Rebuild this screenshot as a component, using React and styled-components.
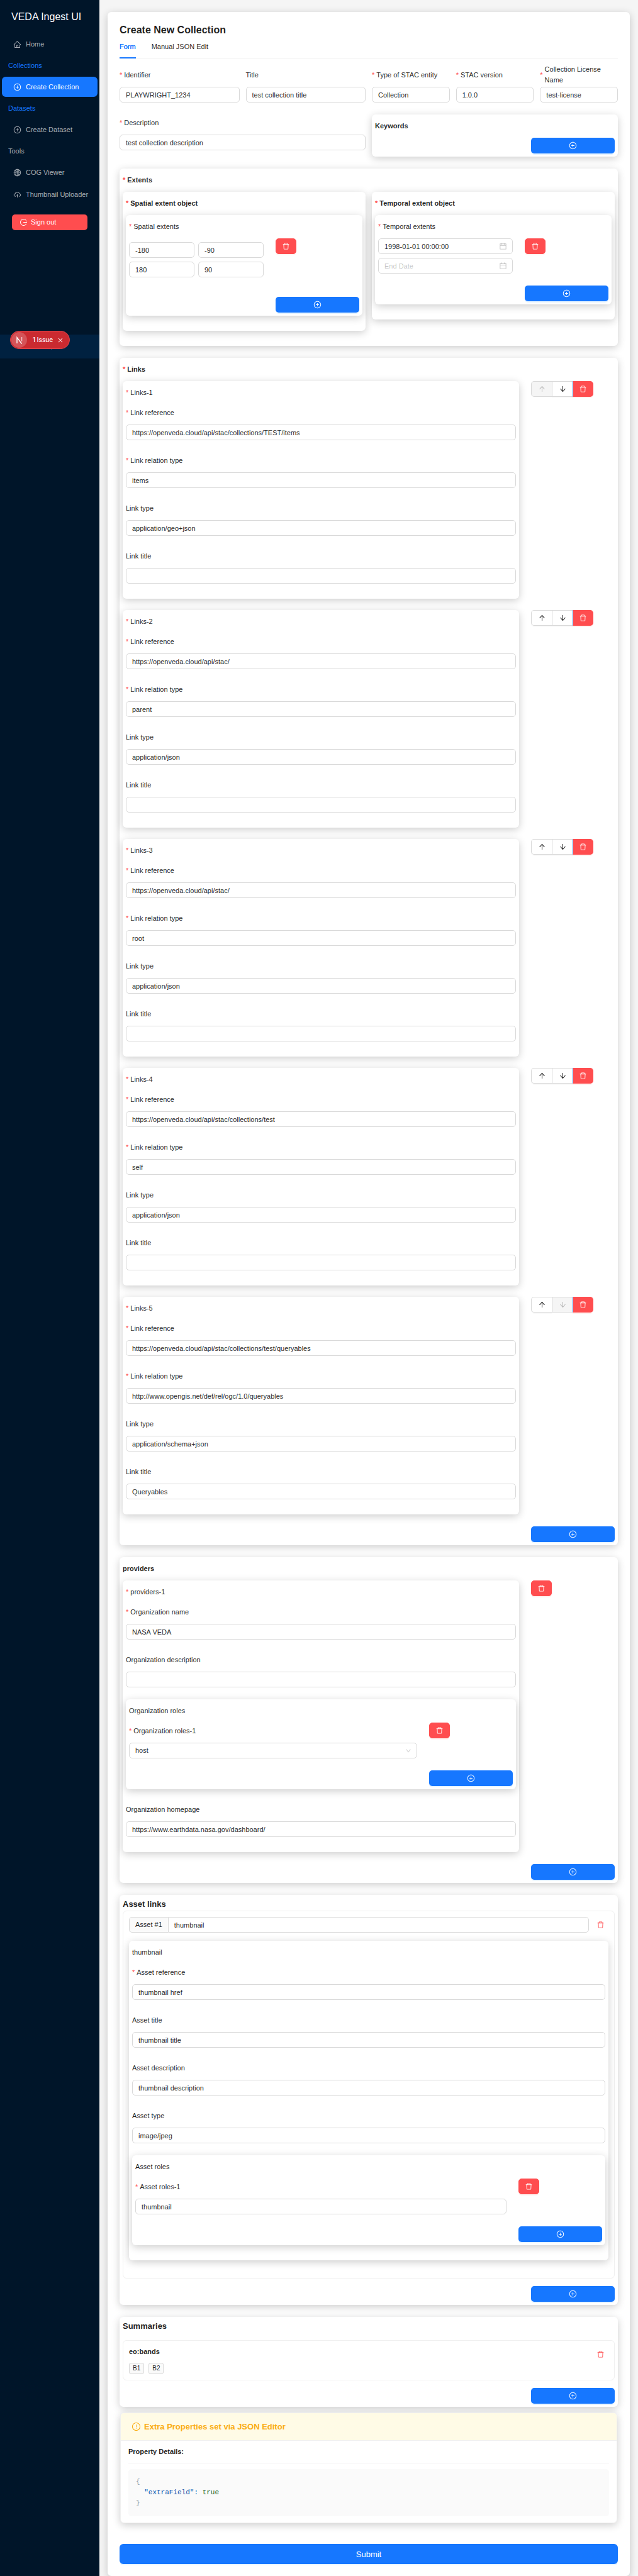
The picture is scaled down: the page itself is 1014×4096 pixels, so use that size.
import React, { useId } from "react";
import styled, { createGlobalStyle, css } from "styled-components";
import {
  AiOutlineHome,
  AiOutlinePlusCircle,
  AiOutlineGlobal,
  AiOutlineCloudUpload,
  AiOutlineLogout,
  AiOutlineDelete,
  AiOutlineArrowUp,
  AiOutlineArrowDown,
  AiOutlineCalendar,
  AiOutlineDown,
  AiOutlineExclamationCircle,
  AiOutlineLeft,
  AiOutlineClose,
} from "react-icons/ai";

const GlobalStyle = createGlobalStyle`
  *, *::before, *::after { box-sizing: border-box; }
  body {
    margin: 0;
    background: #f5f5f5;
    color: rgba(0, 0, 0, 0.88);
    font-family: "Liberation Sans", Arial, sans-serif;
    font-size: 11px;
    line-height: 17px;
  }
  button, input, select { font: inherit; color: inherit; }
  svg { display: block; flex: none; }
`;

const shadow = "0 3px 13px rgba(0, 0, 0, 0.2)";

/* ---------- page frame ---------- */

const Page = styled.div`
  display: flex;
  align-items: stretch;
  min-height: 100vh;
  overflow: hidden;
`;

const Sider = styled.aside`
  flex: 0 0 158px;
  background: #001529;
  color: rgba(255, 255, 255, 0.65);
`;

const SiderPanel = styled.div`
  position: relative;
  display: flex;
  flex-direction: column;
  min-height: 570px;
`;

const Brand = styled.div`
  padding: 14px 18px 15px;
  color: #fff;
  font-size: 16px;
  line-height: 25px;
`;

const Menu = styled.nav`
  display: flex;
  flex-direction: column;
  gap: 3px;
`;

const MenuItem = styled.a`
  display: flex;
  align-items: center;
  gap: 7px;
  height: 32px;
  margin: 0 3px;
  padding-left: 18px;
  border-radius: 6px;
  text-decoration: none;
  white-space: nowrap;
  color: ${(p) => (p.$active ? "#fff" : "rgba(255, 255, 255, 0.65)")};
  background: ${(p) => (p.$active ? "#1677ff" : "transparent")};
`;

const MenuGroup = styled.div`
  height: 30px;
  padding: 6px 13px;
  line-height: 18px;
  color: ${(p) => (p.$accent ? "#1677ff" : "rgba(255, 255, 255, 0.65)")};
`;

const SignOut = styled.button`
  display: flex;
  align-items: center;
  gap: 5px;
  height: 25px;
  margin: 16px 19px 0;
  padding: 0 12px;
  border: 0;
  border-radius: 5px;
  background: #ff4d4f;
  color: #fff;
`;

const Trigger = styled.button`
  display: flex;
  align-items: center;
  justify-content: center;
  height: 38px;
  margin-top: auto;
  border: 0;
  background: #002140;
  color: #fff;
`;

const IssueBadge = styled.div`
  position: absolute;
  left: 16px;
  bottom: 15px;
  display: flex;
  align-items: center;
  height: 29px;
  width: 95px;
  padding: 0 9px 0 1px;
  border: 1px solid #e5484d;
  border-radius: 15px;
  background: #ca2a30;
  color: #fff;
  font-family: Inter, sans-serif;
  font-size: 10px;
  font-weight: 500;
  white-space: nowrap;
`;

const IssueLogo = styled.span`
  display: flex;
  align-items: center;
  justify-content: center;
  width: 25px;
  height: 25px;
  margin-right: 9px;
  border-radius: 50%;
  background: #d55358;
`;

const IssueClose = styled.button`
  display: flex;
  margin-left: auto;
  padding: 0;
  border: 0;
  background: none;
`;

const Main = styled.main`
  flex: 1;
  min-width: 0;
  padding: 19px 13px 0;
`;

const Sheet = styled.div`
  padding: 19px;
  border-radius: 6px;
  background: #fff;
  box-shadow: ${shadow};
`;

const PageTitle = styled.h1`
  margin: 0;
  font-size: 16px;
  line-height: 19px;
`;

const Tabs = styled.div`
  display: flex;
  gap: 25px;
  margin-bottom: 13px;
  border-bottom: 1px solid #f0f0f0;
`;

const Tab = styled.button`
  padding: 9px 0 8px;
  margin-bottom: -1px;
  border: 0;
  border-bottom: 2px solid ${(p) => (p.$active ? "#1677ff" : "transparent")};
  background: none;
  color: ${(p) => (p.$active ? "#1677ff" : "inherit")};
  text-shadow: ${(p) => (p.$active ? "0 0 0.25px currentcolor" : "none")};
`;

/* ---------- layout pieces ---------- */

const Grid = styled.div`
  display: grid;
  grid-template-columns: repeat(24, minmax(0, 1fr));
  column-gap: 10px;
  align-items: start;
  margin-bottom: 19px;
`;

const Col = styled.div`
  grid-column: span ${(p) => p.$span};
`;

const Group = styled.section`
  padding: 5px;
  border-radius: 6px;
  background: #fff;
  box-shadow: ${shadow};
  margin-bottom: ${(p) => (p.$last ? 0 : p.$tight ? 9 : 19)}px;
`;

const labelText = css`
  display: flex;
  align-items: center;
  height: 26px;
  margin: 0 0 6px;
  font-size: 11px;
  font-weight: ${(p) => (p.$strong ? 700 : 400)};
  &::before {
    content: ${(p) => (p.$required ? '"*"' : "none")};
    margin-right: 3px;
    color: #ff4d4f;
  }
`;

const Legend = styled.h2`
  ${labelText}
`;

const SectionTitle = styled.h2`
  margin: 0 0 ${(p) => (p.$spaced ? 12 : 0)}px;
  font-size: 13px;
  line-height: 20px;
`;

const FieldBox = styled.div`
  margin-bottom: ${(p) => (p.$flush ? 0 : 19)}px;
`;

const FieldLabel = styled.label`
  ${labelText}
`;

const control = css`
  display: block;
  width: 100%;
  height: 25px;
  padding: 0 9px;
  border: 1px solid #d9d9d9;
  border-radius: 5px;
  background: #fff;
  outline: none;
`;

const TextInput = styled.input`
  ${control}
  &::placeholder { color: rgba(0, 0, 0, 0.25); }
`;

const ControlWrap = styled.div`
  display: grid;
  align-items: center;
  > * { grid-area: 1 / 1; }
  > svg {
    justify-self: end;
    margin-right: 9px;
    color: rgba(0, 0, 0, 0.25);
    pointer-events: none;
  }
`;

const Select = styled.select`
  ${control}
  appearance: none;
`;

const ItemRow = styled.div`
  display: grid;
  grid-template-columns: minmax(0, 1fr) 133px;
  column-gap: 19px;
  align-items: start;
`;

const ItemList = styled.div`
  display: flex;
  flex-direction: column;
  gap: 18px;
`;

const BoundsGrid = styled.div`
  display: grid;
  grid-template-columns: 1fr 1fr;
  gap: 6px;
  padding: 6px 0 12px;
`;

const DateStack = styled.div`
  display: grid;
  gap: 6px;
`;

const Actions = styled.div`
  display: flex;
`;

const IconButton = styled.button`
  display: flex;
  align-items: center;
  justify-content: center;
  width: 33px;
  height: 25px;
  padding: 0;
  border: 1px solid ${(p) => (p.$danger ? "#ff4d4f" : "#d9d9d9")};
  border-radius: 5px;
  background: ${(p) => (p.$danger ? "#ff4d4f" : "#fff")};
  color: ${(p) => (p.$danger ? "#fff" : "inherit")};
  box-shadow: 0 2px 0 ${(p) => (p.$danger ? "rgba(255, 38, 5, 0.06)" : "rgba(0, 0, 0, 0.02)")};
  &:disabled {
    background: #f5f5f5;
    color: rgba(0, 0, 0, 0.25);
    box-shadow: none;
  }
  ${Actions} > &:not(:first-child) {
    border-top-left-radius: 0;
    border-bottom-left-radius: 0;
    border-left-color: ${(p) => (p.$danger ? "#4096ff" : "#d9d9d9")};
  }
  ${Actions} > &:not(:last-child) {
    border-top-right-radius: 0;
    border-bottom-right-radius: 0;
    border-right: 0;
  }
`;

const GhostDelete = styled.button`
  display: flex;
  align-items: center;
  justify-content: center;
  width: 25px;
  height: 25px;
  padding: 0;
  border: 0;
  background: none;
  color: #ff4d4f;
`;

const AddRow = styled.div`
  display: flex;
  justify-content: flex-end;
  margin-top: ${(p) => p.$gap}px;
`;

const AddButton = styled.button`
  display: flex;
  align-items: center;
  justify-content: center;
  width: 133px;
  height: 25px;
  padding: 0;
  border: 0;
  border-radius: 5px;
  background: #1677ff;
  color: #fff;
  box-shadow: 0 2px 0 rgba(5, 145, 255, 0.1);
`;

const Outline = styled.div`
  padding: 9px;
  border: 1px solid #f0f0f0;
  border-radius: 6px;
`;

const AssetHead = styled.div`
  display: flex;
  align-items: center;
  gap: 6px;
  margin-bottom: 13px;
`;

const AddonField = styled.div`
  display: flex;
  flex: 1;
`;

const Addon = styled.label`
  display: flex;
  align-items: center;
  padding: 0 9px;
  border: 1px solid #d9d9d9;
  border-right: 0;
  border-radius: 5px 0 0 5px;
  background: #fafafa;
  white-space: nowrap;
`;

const AddonInput = styled(TextInput)`
  border-radius: 0 5px 5px 0;
`;

const SummaryItem = styled(Outline)`
  display: flex;
  align-items: flex-start;
  justify-content: space-between;
`;

const SummaryName = styled.h3`
  margin: 0 0 9px;
  font-size: 11px;
  line-height: 17px;
`;

const Tags = styled.div`
  display: flex;
  gap: 7px;
`;

const Tag = styled.span`
  height: 18px;
  padding: 0 5px;
  border: 1px solid #d9d9d9;
  border-radius: 3px;
  background: #fafafa;
  font-size: 10px;
  line-height: 16px;
`;

const ExtraCard = styled.section`
  margin: 0 1px 33px;
  border: 1px solid #f0f0f0;
  border-radius: 6px;
  overflow: hidden;
  background: #fff;
  box-shadow: ${shadow};
`;

const ExtraHead = styled.header`
  display: flex;
  align-items: center;
  gap: 5px;
  height: 44px;
  padding: 0 17px;
  border-bottom: 1px solid #f0f0f0;
  background: #fffbe6;
  color: #faad14;
  h2 { margin: 0; font-size: 13px; }
`;

const ExtraBody = styled.div`
  padding: 9px 12px 10px;
  h3 {
    margin: 0 0 9px;
    padding-bottom: 9px;
    border-bottom: 1px solid #f0f0f0;
    font-size: 11px;
    line-height: 17px;
  }
`;

const Code = styled.pre`
  margin: 0;
  padding: 12px;
  border-radius: 5px;
  background: #fafafa;
  color: #0550ae;
  font-family: "Liberation Mono", monospace;
  font-size: 11px;
  line-height: 17px;
`;

const Brace = styled.span`color: #8c9bab;`;
const Literal = styled.span`color: #116329;`;

const Submit = styled.button`
  display: block;
  width: 100%;
  height: 32px;
  border: 0;
  border-radius: 6px;
  background: #1677ff;
  color: #fff;
  font-size: 13px;
  box-shadow: 0 2px 0 rgba(5, 145, 255, 0.1);
`;

/* ---------- small composites ---------- */

function Field({ label, value = "", required, flush }) {
  const id = useId();
  return (
    <FieldBox $flush={flush}>
      <FieldLabel htmlFor={id} $required={required}>{label}</FieldLabel>
      <TextInput id={id} defaultValue={value} />
    </FieldBox>
  );
}

function Add({ gap = 19, label = "Add item" }) {
  return (
    <AddRow $gap={gap}>
      <AddButton type="button" aria-label={label}><AiOutlinePlusCircle size={13} /></AddButton>
    </AddRow>
  );
}

function Remove() {
  return <IconButton type="button" $danger aria-label="Remove"><AiOutlineDelete size={13} /></IconButton>;
}

function DateField({ label, value, placeholder }) {
  return (
    <ControlWrap>
      <TextInput aria-label={label} defaultValue={value} placeholder={placeholder} />
      <AiOutlineCalendar size={13} />
    </ControlWrap>
  );
}

function LinkItem({ index, count, link }) {
  return (
    <ItemRow>
      <Group $last>
        <Legend as="h3" $required>{`Links-${index + 1}`}</Legend>
        <Field label="Link reference" value={link.href} required />
        <Field label="Link relation type" value={link.rel} required />
        <Field label="Link type" value={link.type} />
        <Field label="Link title" value={link.title} />
      </Group>
      <Actions>
        <IconButton type="button" disabled={index === 0} aria-label="Move up"><AiOutlineArrowUp size={13} /></IconButton>
        <IconButton type="button" disabled={index === count - 1} aria-label="Move down"><AiOutlineArrowDown size={13} /></IconButton>
        <Remove />
      </Actions>
    </ItemRow>
  );
}

const links = [
  { href: "https://openveda.cloud/api/stac/collections/TEST/items", rel: "items", type: "application/geo+json" },
  { href: "https://openveda.cloud/api/stac/", rel: "parent", type: "application/json" },
  { href: "https://openveda.cloud/api/stac/", rel: "root", type: "application/json" },
  { href: "https://openveda.cloud/api/stac/collections/test", rel: "self", type: "application/json" },
  {
    href: "https://openveda.cloud/api/stac/collections/test/queryables",
    rel: "http://www.opengis.net/def/rel/ogc/1.0/queryables",
    type: "application/schema+json",
    title: "Queryables",
  },
];

const bounds = [
  ["West", "-180"],
  ["South", "-90"],
  ["East", "180"],
  ["North", "90"],
];

function Sidebar() {
  return (
    <Sider>
      <SiderPanel>
        <Brand>VEDA Ingest UI</Brand>
        <Menu>
          <MenuItem href="#home"><AiOutlineHome size={13} />Home</MenuItem>
          <MenuGroup $accent>Collections</MenuGroup>
          <MenuItem href="#create-collection" $active><AiOutlinePlusCircle size={13} />Create Collection</MenuItem>
          <MenuGroup $accent>Datasets</MenuGroup>
          <MenuItem href="#create-dataset"><AiOutlinePlusCircle size={13} />Create Dataset</MenuItem>
          <MenuGroup>Tools</MenuGroup>
          <MenuItem href="#cog-viewer"><AiOutlineGlobal size={13} />COG Viewer</MenuItem>
          <MenuItem href="#thumbnails"><AiOutlineCloudUpload size={13} />Thumbnail Uploader</MenuItem>
        </Menu>
        <SignOut type="button"><AiOutlineLogout size={13} />Sign out</SignOut>
        <Trigger type="button" aria-label="Collapse menu"><AiOutlineLeft size={11} /></Trigger>
        <IssueBadge>
          <IssueLogo>
            <svg width="14" height="14" viewBox="0 0 14 14" fill="none" stroke="#fff" strokeWidth="1.4">
              <path d="M3 12V2.6L10.6 12.6" />
              <path d="M10.6 2v6.6" strokeOpacity="0.7" />
            </svg>
          </IssueLogo>
          1 Issue
          <IssueClose type="button" aria-label="Dismiss"><AiOutlineClose size={10} /></IssueClose>
        </IssueBadge>
      </SiderPanel>
    </Sider>
  );
}

export default function App() {
  const roleId = useId();
  const assetId = useId();
  return (
    <>
      <GlobalStyle />
      <Page>
        <Sidebar />
        <Main>
          <Sheet>
            <PageTitle>Create New Collection</PageTitle>
            <Tabs>
              <Tab type="button" $active>Form</Tab>
              <Tab type="button">Manual JSON Edit</Tab>
            </Tabs>

            <Grid>
              <Col $span={6}><Field flush required label="Identifier" value="PLAYWRIGHT_1234" /></Col>
              <Col $span={6}><Field flush label="Title" value="test collection title" /></Col>
              <Col $span={4}><Field flush required label="Type of STAC entity" value="Collection" /></Col>
              <Col $span={4}><Field flush required label="STAC version" value="1.0.0" /></Col>
              <Col $span={4}><Field flush required label="Collection License Name" value="test-license" /></Col>
            </Grid>

            <Grid>
              <Col $span={12}><Field flush required label="Description" value="test collection description" /></Col>
              <Col $span={12}>
                <Group $last>
                  <Legend $strong>Keywords</Legend>
                  <Add gap={0} />
                </Group>
              </Col>
            </Grid>

            <Group>
              <Legend $strong $required>Extents</Legend>
              <Grid>
                <Col $span={12}>
                  <Group $last>
                    <Legend as="h3" $strong $required>Spatial extent object</Legend>
                    <Group>
                      <Legend as="h4" $required>Spatial extents</Legend>
                      <ItemRow>
                        <BoundsGrid>
                          {bounds.map(([name, value]) => (
                            <TextInput key={name} aria-label={name} defaultValue={value} />
                          ))}
                        </BoundsGrid>
                        <Remove />
                      </ItemRow>
                      <Add />
                    </Group>
                  </Group>
                </Col>
                <Col $span={12}>
                  <Group $last>
                    <Legend as="h3" $strong $required>Temporal extent object</Legend>
                    <Group>
                      <Legend as="h4" $required>Temporal extents</Legend>
                      <ItemRow>
                        <DateStack>
                          <DateField label="Start date" value="1998-01-01 00:00:00" />
                          <DateField label="End date" placeholder="End Date" />
                        </DateStack>
                        <Remove />
                      </ItemRow>
                      <Add />
                    </Group>
                  </Group>
                </Col>
              </Grid>
            </Group>

            <Group>
              <Legend $strong $required>Links</Legend>
              <ItemList>
                {links.map((link, i) => (
                  <LinkItem key={i} index={i} count={links.length} link={link} />
                ))}
              </ItemList>
              <Add />
            </Group>

            <Group>
              <Legend $strong>providers</Legend>
              <ItemRow>
                <Group $last>
                  <Legend as="h3" $required>providers-1</Legend>
                  <Field required label="Organization name" value="NASA VEDA" />
                  <Field label="Organization description" />
                  <Group>
                    <Legend as="h4">Organization roles</Legend>
                    <ItemRow>
                      <FieldBox $flush>
                        <FieldLabel htmlFor={roleId} $required>Organization roles-1</FieldLabel>
                        <ControlWrap>
                          <Select id={roleId} defaultValue="host">
                            <option>host</option>
                          </Select>
                          <AiOutlineDown size={10} />
                        </ControlWrap>
                      </FieldBox>
                      <Remove />
                    </ItemRow>
                    <Add />
                  </Group>
                  <Field label="Organization homepage" value="https://www.earthdata.nasa.gov/dashboard/" />
                </Group>
                <Remove />
              </ItemRow>
              <Add />
            </Group>

            <Group>
              <SectionTitle>Asset links</SectionTitle>
              <Outline>
                <AssetHead>
                  <AddonField>
                    <Addon htmlFor={assetId}>Asset #1</Addon>
                    <AddonInput id={assetId} defaultValue="thumbnail" />
                  </AddonField>
                  <GhostDelete type="button" aria-label="Remove asset"><AiOutlineDelete size={13} /></GhostDelete>
                </AssetHead>
                <Group>
                  <Legend as="h3">thumbnail</Legend>
                  <Field required label="Asset reference" value="thumbnail href" />
                  <Field label="Asset title" value="thumbnail title" />
                  <Field label="Asset description" value="thumbnail description" />
                  <Field label="Asset type" value="image/jpeg" />
                  <Group>
                    <Legend as="h4">Asset roles</Legend>
                    <ItemRow>
                      <Field flush required label="Asset roles-1" value="thumbnail" />
                      <Remove />
                    </ItemRow>
                    <Add />
                  </Group>
                </Group>
              </Outline>
              <Add gap={12} />
            </Group>

            <Group $tight>
              <SectionTitle $spaced>Summaries</SectionTitle>
              <SummaryItem>
                <div>
                  <SummaryName>eo:bands</SummaryName>
                  <Tags><Tag>B1</Tag><Tag>B2</Tag></Tags>
                </div>
                <GhostDelete type="button" aria-label="Remove summary"><AiOutlineDelete size={13} /></GhostDelete>
              </SummaryItem>
              <Add gap={12} />
            </Group>

            <ExtraCard>
              <ExtraHead>
                <AiOutlineExclamationCircle size={15} />
                <h2>Extra Properties set via JSON Editor</h2>
              </ExtraHead>
              <ExtraBody>
                <h3>Property Details:</h3>
                <Code>
                  <Brace>{"{"}</Brace>{"\n  \"extraField\": "}<Literal>true</Literal>{"\n"}<Brace>{"}"}</Brace>
                </Code>
              </ExtraBody>
            </ExtraCard>

            <Submit type="submit">Submit</Submit>
          </Sheet>
        </Main>
      </Page>
    </>
  );
}
